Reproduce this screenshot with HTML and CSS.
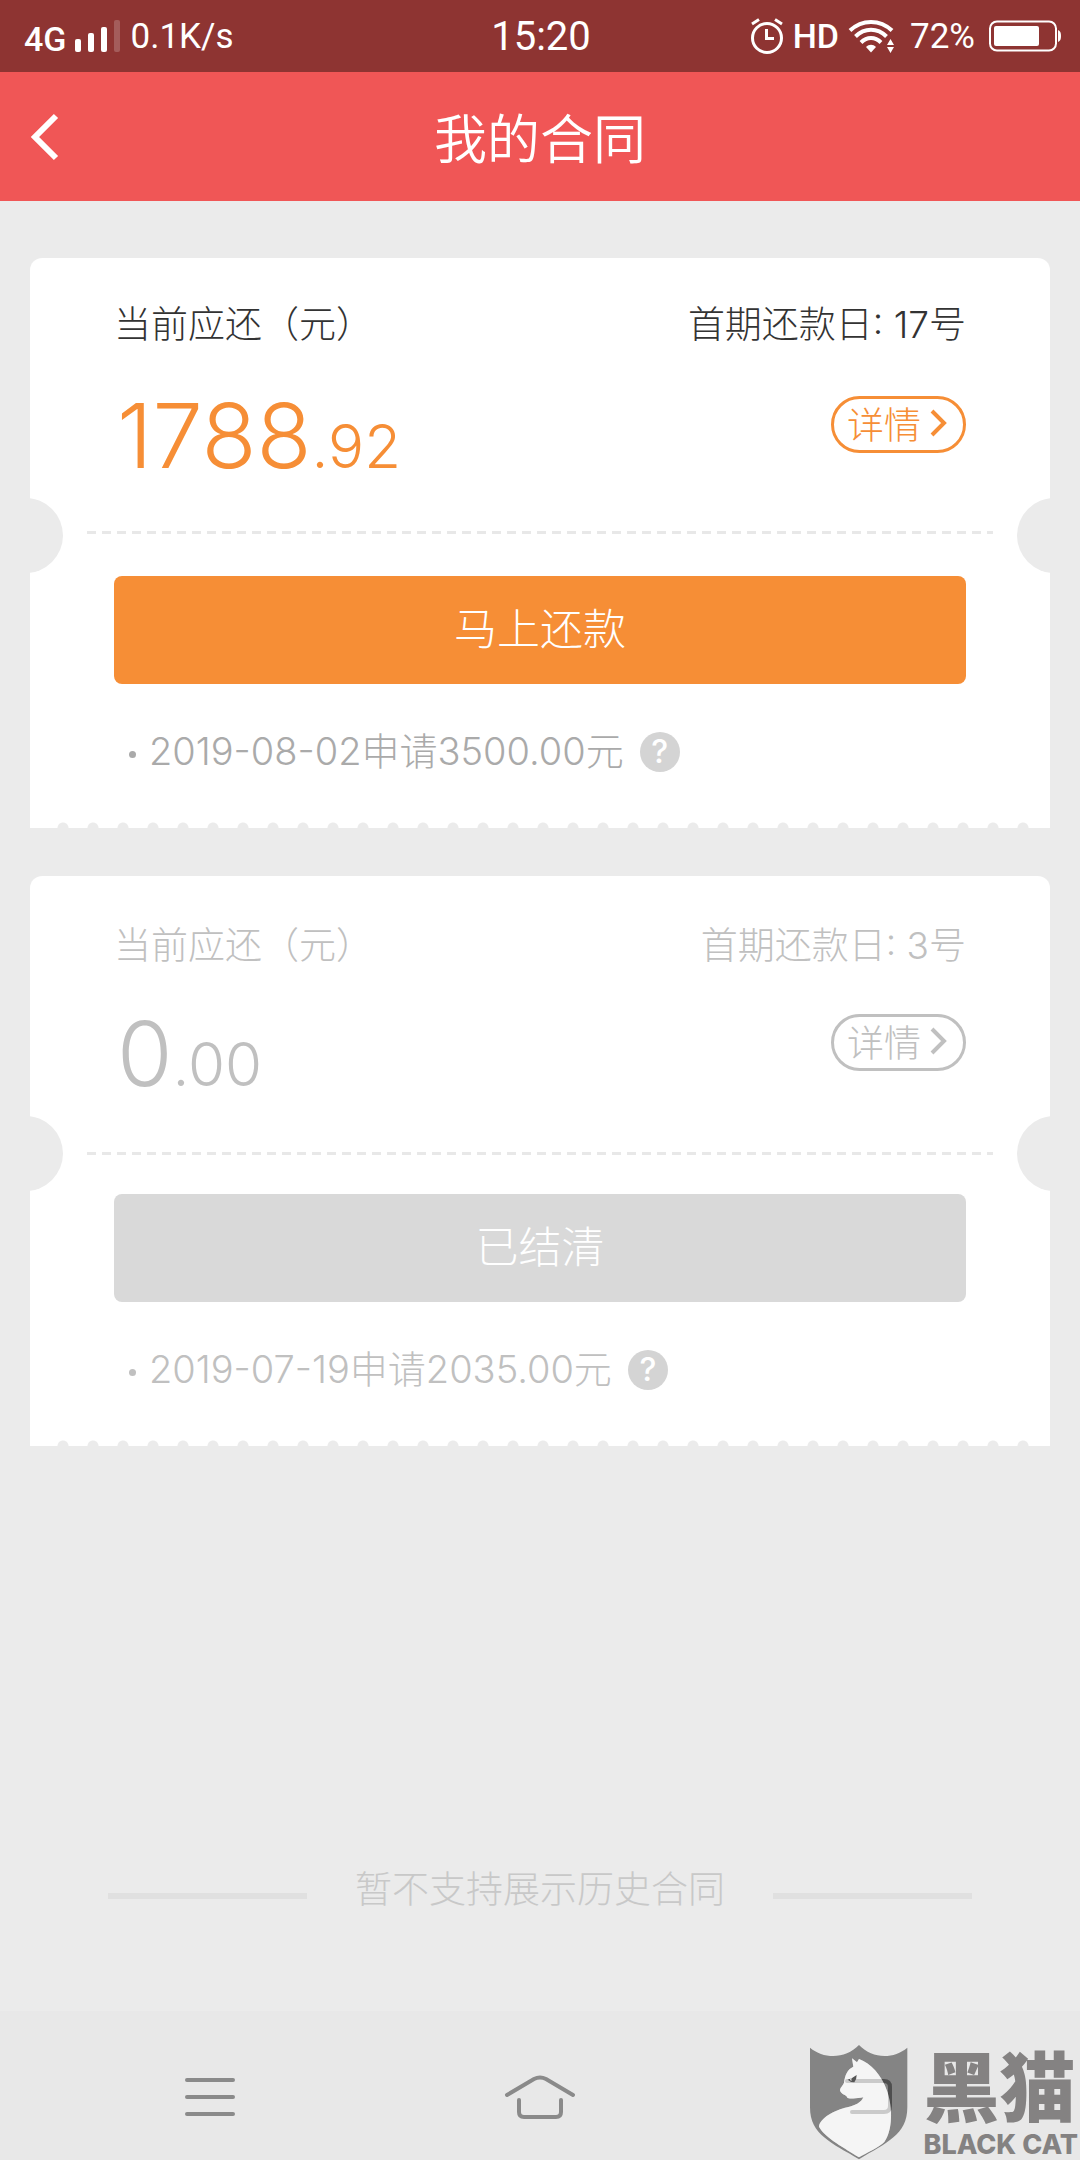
FILE: index.html
```html
<!DOCTYPE html>
<html lang="zh-CN">
<head>
<meta charset="utf-8">
<meta name="viewport" content="width=device-width, initial-scale=1">
<title>我的合同</title>
<link rel="stylesheet" href="styles.css">
</head>
<body>
<div class="page">
  <div class="status">
    <div class="status__side">
      <span class="status__net">4G</span>
      <svg class="status__signal" width="46" height="34" viewBox="0 0 46 34" fill="#fff" aria-hidden="true">
        <rect x="0" y="20" width="6" height="13" rx="2"/>
        <rect x="13" y="14" width="6" height="19" rx="2"/>
        <rect x="26" y="8" width="6" height="25" rx="2"/>
        <rect x="39" y="1" width="6" height="32" rx="2" opacity=".2"/>
      </svg>
      <span class="status__text">0.1K/s</span>
    </div>
    <span class="status__time">15:20</span>
    <div class="status__side status__side--end">
      <svg width="34" height="38" viewBox="0 0 34 38" fill="none" stroke="#fff" stroke-width="3" aria-hidden="true">
        <circle cx="17" cy="21" r="14.5"/>
        <path d="M16.500 12v9.500H24M2 7l7-4.500M32 7l-7-4.500"/>
      </svg>
      <span class="status__hd">HD</span>
      <svg class="status__wifi" width="48" height="36" viewBox="0 0 48 36" fill="none" stroke="#fff" stroke-width="4" aria-hidden="true">
        <path d="M2 12.500C14 1 32 1 44 12.500M7.500 18.500c9-9 22-9 31 0M13 24.500c6-6 14-6 20 0"/>
        <path d="M18 29c3-3 7-3 10 0l-5 5.500z" fill="#fff" stroke="none"/>
        <path d="M39 27l3.500-6 3.500 6zM39 29l3.500 6 3.500-6z" fill="#fff" stroke="none"/>
      </svg>
      <span class="status__text">72%</span>
      <svg class="status__battery" width="73" height="32" viewBox="0 0 73 32" aria-hidden="true">
        <rect x="1" y="1.500" width="66" height="29" rx="7" fill="none" stroke="#fff" stroke-width="2"/>
        <rect x="5" y="6" width="45" height="20" rx="2" fill="#fff"/>
        <path d="M69 10c2.500 1 3 3 3 6s-.5 5-3 6z" fill="#fff"/>
      </svg>
    </div>
  </div>

  <header class="bar">
    <button class="bar__back" type="button" aria-label="返回">
      <svg width="30" height="48" viewBox="0 0 30 48" fill="none" stroke="#fff" stroke-width="6" aria-hidden="true"><path d="M26 3L5 24l21 21"/></svg>
    </button>
    <h1 class="bar__title">我的合同</h1>
  </header>

  <main class="main">
    <section class="contract">
      <div class="contract__head"><span>当前应还（元）</span><span>首期还款日: 17号</span></div>
      <div class="contract__sum">
        <p class="amount">1788<span class="amount__cents">.92</span></p>
        <button class="detail" type="button">详情
          <svg width="17" height="28" viewBox="0 0 17 28" fill="none" stroke="currentColor" stroke-width="4" aria-hidden="true"><path d="M2 2l12 12L2 26"/></svg>
        </button>
      </div>
      <div class="contract__rule"></div>
      <button class="pay" type="button">马上还款</button>
      <div class="contract__note">
        <span class="contract__text">2019-08-02申请3500.00元</span>
        <button class="help" type="button" aria-label="说明">?</button>
      </div>
    </section>

    <section class="contract contract--settled">
      <div class="contract__head"><span>当前应还（元）</span><span>首期还款日: 3号</span></div>
      <div class="contract__sum">
        <p class="amount">0<span class="amount__cents">.00</span></p>
        <button class="detail" type="button">详情
          <svg width="17" height="28" viewBox="0 0 17 28" fill="none" stroke="currentColor" stroke-width="4" aria-hidden="true"><path d="M2 2l12 12L2 26"/></svg>
        </button>
      </div>
      <div class="contract__rule"></div>
      <button class="pay" type="button" disabled>已结清</button>
      <div class="contract__note">
        <span class="contract__text">2019-07-19申请2035.00元</span>
        <button class="help" type="button" aria-label="说明">?</button>
      </div>
    </section>

    <p class="history">暂不支持展示历史合同</p>
  </main>

  <nav class="nav">
    <button class="nav__key" type="button" aria-label="菜单">
      <svg width="52" height="40" viewBox="0 0 52 40" aria-hidden="true"><path d="M3 3h46M3 20h46M3 37h46"/></svg>
    </button>
    <button class="nav__key" type="button" aria-label="主页">
      <svg width="72" height="46" viewBox="0 0 72 46" aria-hidden="true"><path d="M3 21L30 5q6-3 12 0l27 16M15 26v12q0 5 5 5h32q5 0 5-5V26"/></svg>
    </button>
    <button class="nav__key" type="button" aria-label="返回">
      <svg width="52" height="40" viewBox="0 0 52 40" aria-hidden="true"><path d="M3 4h37q6 0 6 6v19q0 6-6 6H8"/></svg>
    </button>
    <div class="mark">
      <svg width="99" height="116" viewBox="90 72 297 348" aria-hidden="true">
        <path fill="#000" fill-opacity=".43" fill-rule="evenodd" d="M93 83C135 118 200 117 240 75C280 117 343 118 385 83V262C385 345 322 368 240 418C158 368 93 345 93 262ZM219 115L234 127L240 117C275 130 308 165 324 212C342 265 341 330 316 366C300 382 264 398 240 412C198 384 140 356 120 320C122 295 168 270 205 262C230 256 247 247 253 232C235 236 215 237 205 233C202 224 186 224 183 211C183 203 192 197 195 188C198 165 205 148 223 140Z"/>
        <path fill="#fff" fill-opacity=".55" d="M219 115L234 127L240 117C275 130 308 165 324 212C342 265 341 330 316 366C300 382 264 398 240 412C198 384 140 356 120 320C122 295 168 270 205 262C230 256 247 247 253 232C235 236 215 237 205 233C202 224 186 224 183 211C183 203 192 197 195 188C198 165 205 148 223 140Z"/>
        <path fill="#555" d="M206 179q13-3 27-14q0 14-7 22q-12 0-20-8z"/>
        <path fill="#eee" d="M213 176l5-2q-2 6 0 9q-5-2-5-7z"/>
      </svg>
      <div class="mark__words"><span class="mark__name">黑猫</span><span class="mark__latin">BLACK CAT</span></div>
    </div>
  </nav>
</div>
</body>
</html>
```
FILE: styles.css
```css
* {
  box-sizing: border-box;
}

body {
  margin: 0;
  background: #ebebeb;
  font-family: "Inter", "Noto Sans CJK SC", sans-serif;
  font-weight: 300;
}

h1,
p {
  margin: 0;
  font-weight: inherit;
}

button {
  padding: 0;
  border: 0;
  background: none;
  color: inherit;
  font: inherit;
}

svg {
  display: block;
  flex: none;
}

.page {
  display: flex;
  flex-direction: column;
  min-height: 100vh;
}

/* System status bar */
.status {
  display: flex;
  align-items: center;
  height: 72px;
  padding: 0 18px 0 24px;
  background: #8e3432;
  color: #fff;
  font-family: "Roboto", sans-serif;
  font-weight: 400;
}

.status__side {
  display: flex;
  flex: 1;
  align-items: center;
}

.status__side--end {
  justify-content: flex-end;
}

.status__net {
  margin-top: 6px;
  font-size: 34px;
  font-weight: 500;
}

.status__signal {
  margin: 0 9px;
}

.status__text {
  font-size: 35px;
}

.status__time {
  margin-right: 4px;
  font-size: 40px;
}

.status__hd {
  margin: 0 9px;
  font-size: 34px;
  font-weight: 500;
}

.status__wifi {
  margin-right: 14px;
}

.status__battery {
  margin-left: 14px;
}

/* Title bar */
.bar {
  display: grid;
  grid-template-columns: 90px 1fr 90px;
  align-items: center;
  height: 129px;
  background: #f05656;
  color: #fff;
}

.bar__back {
  justify-self: start;
  padding-left: 30px;
}

.bar__title {
  padding-top: 6px;
  font-size: 53px;
  font-weight: 350;
  line-height: 72px;
  text-align: center;
}

/* Contracts */
.main {
  display: flex;
  flex: 1;
  flex-direction: column;
  gap: 48px;
  padding: 57px 30px 95px;
}

.contract {
  position: relative;
  overflow: hidden;
  padding: 42px 84px 54px;
  border-radius: 12px 12px 0 0;
  background:
    linear-gradient(#fff, #fff) 0 100% / 18px 6px no-repeat,
    linear-gradient(#fff, #fff) 100% 100% / 12px 6px no-repeat,
    radial-gradient(circle at 15px 6px, #ebebeb 5px, transparent 6px) 18px 100% / 30px 6px repeat-x,
    #fff;
  color: #333;
  font-size: 37px;
}

.contract::before,
.contract::after {
  content: "";
  position: absolute;
  top: 240px;
  width: 75px;
  height: 75px;
  border-radius: 50%;
  background: #ebebeb;
}

.contract::before {
  left: -42px;
}

.contract::after {
  right: -42px;
}

.contract__head {
  display: flex;
  justify-content: space-between;
  line-height: 50px;
}

.contract__sum {
  display: flex;
  align-items: flex-start;
  justify-content: space-between;
  height: 96px;
  margin-top: 38px;
  color: #f68e36;
}

.amount {
  padding-left: 3px;
  font-size: 90px;
  font-weight: 350;
  line-height: 96px;
}

.amount__cents {
  font-size: 60px;
  line-height: 60px;
}

.detail {
  display: flex;
  align-items: center;
  gap: 9px;
  height: 57px;
  margin-top: 8px;
  padding: 0 16px 4px 13px;
  border: 3px solid currentColor;
  border-radius: 29px;
}

.contract__rule {
  height: 3px;
  margin: 47px -27px 42px;
  background: repeating-linear-gradient(90deg, #e8e8e8 0 9px, transparent 9px 15px);
}

.pay {
  display: block;
  width: 100%;
  height: 108px;
  padding-bottom: 8px;
  border-radius: 8px;
  background: #f68e36;
  color: #fff;
  font-size: 43px;
}

.contract__note {
  display: flex;
  align-items: center;
  height: 48px;
  margin-top: 42px;
  padding-left: 15px;
  color: #aaa;
  font-size: 38px;
}

.contract__note::before {
  content: "";
  width: 7px;
  height: 7px;
  margin: 8px 13px 0 0;
  border-radius: 50%;
  background: currentColor;
}

.contract__text {
  margin-bottom: 4px;
}

.help {
  width: 40px;
  height: 40px;
  margin: 4px 0 0 16px;
  border-radius: 50%;
  background: #d4d4d4;
  color: #fff;
  font-size: 32px;
  font-weight: 500;
  line-height: 40px;
}

.contract--settled {
  padding-top: 45px;
  color: #c0c0c0;
}

.contract--settled .contract__sum {
  margin-top: 35px;
  color: #c0c0c0;
}

.contract--settled .contract__rule {
  margin-top: 50px;
  margin-bottom: 39px;
}

.contract--settled .pay {
  background: #d9d9d9;
}

.contract--settled .contract__note {
  color: #c0c0c0;
}

.history {
  display: flex;
  align-items: center;
  gap: 48px;
  margin-top: auto;
  padding: 0 78px;
  color: #c8c8c8;
  font-size: 37px;
  line-height: 52px;
}

.history::before,
.history::after {
  content: "";
  flex: 1;
  height: 6px;
  margin-top: 12px;
  background: #e0e0e0;
}

/* System navigation keys */
.nav {
  position: relative;
  display: grid;
  grid-template-columns: repeat(3, 1fr);
  place-items: center;
  height: 149px;
  padding: 22px 45px 0;
  background: #e8e8e8;
}

.nav__key svg {
  fill: none;
  stroke: #8a8a8a;
  stroke-width: 4;
  stroke-linecap: round;
}

.mark {
  position: absolute;
  right: 2px;
  bottom: 0;
  display: flex;
  align-items: flex-end;
  gap: 15px;
  color: #848282;
}

.mark__words {
  display: flex;
  flex-direction: column;
}

.mark__name {
  font-size: 76px;
  font-weight: 900;
  line-height: 84px;
}

.mark__latin {
  font-size: 27px;
  font-weight: 800;
  line-height: 30px;
}
```
